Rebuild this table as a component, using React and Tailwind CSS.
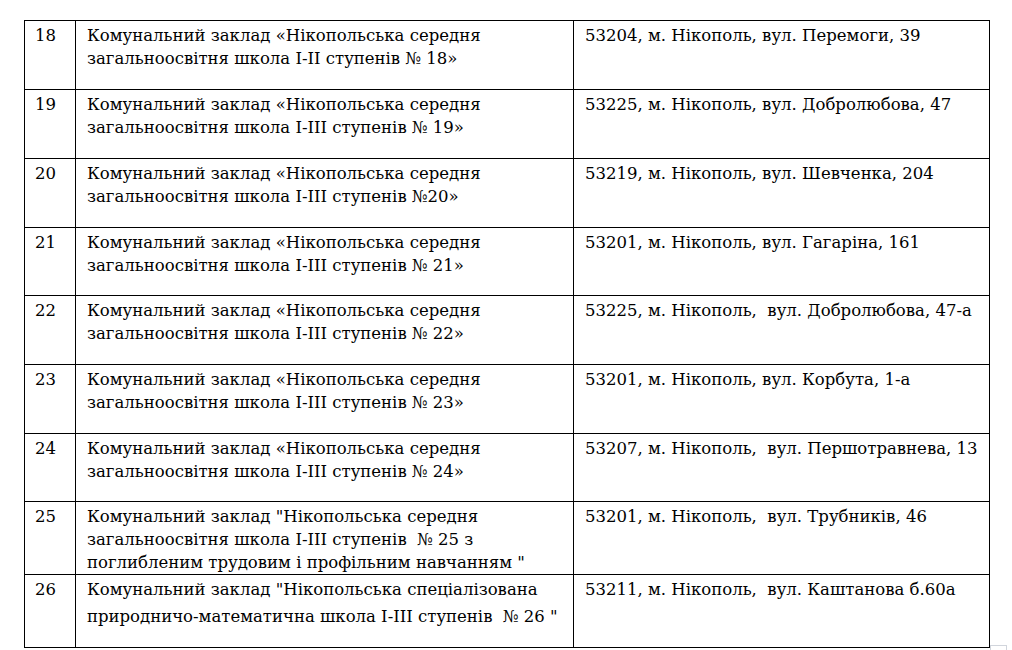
import React from 'react';

const rows = [
  { n: '18', name: ['Комунальний заклад «Нікопольська середня', 'загальноосвітня школа І-ІІ ступенів № 18»'], addr: '53204, м. Нікополь, вул. Перемоги, 39', h: 'h-[69px]' },
  { n: '19', name: ['Комунальний заклад «Нікопольська середня', 'загальноосвітня школа І-ІІІ ступенів № 19»'], addr: '53225, м. Нікополь, вул. Добролюбова, 47', h: 'h-[69px]' },
  { n: '20', name: ['Комунальний заклад «Нікопольська середня', 'загальноосвітня школа І-ІІІ ступенів №20»'], addr: '53219, м. Нікополь, вул. Шевченка, 204', h: 'h-[69px]' },
  { n: '21', name: ['Комунальний заклад «Нікопольська середня', 'загальноосвітня школа І-ІІІ ступенів № 21»'], addr: '53201, м. Нікополь, вул. Гагаріна, 161', h: 'h-[68px]' },
  { n: '22', name: ['Комунальний заклад «Нікопольська середня', 'загальноосвітня школа І-ІІІ ступенів № 22»'], addr: '53225, м. Нікополь,  вул. Добролюбова, 47-а', h: 'h-[69px]' },
  { n: '23', name: ['Комунальний заклад «Нікопольська середня', 'загальноосвітня школа І-ІІІ ступенів № 23»'], addr: '53201, м. Нікополь, вул. Корбута, 1-а', h: 'h-[69px]' },
  { n: '24', name: ['Комунальний заклад «Нікопольська середня', 'загальноосвітня школа І-ІІІ ступенів № 24»'], addr: '53207, м. Нікополь,  вул. Першотравнева, 13', h: 'h-[68px]' },
  { n: '25', name: ['Комунальний заклад "Нікопольська середня', 'загальноосвітня школа І-ІІІ ступенів  № 25 з', 'поглибленим трудовим і профільним навчанням "'], addr: '53201, м. Нікополь,  вул. Трубників, 46', h: 'h-[70px]' },
  { n: '26', name: ['Комунальний заклад "Нікопольська спеціалізована', 'природничо-математична школа І-ІІІ ступенів  № 26 "'], addr: '53211, м. Нікополь,  вул. Каштанова б.60а', h: 'h-[73px]', wide: true },
];

const cell = 'border border-black align-top p-0 pt-[3px] whitespace-pre font-[DejaVu_Serif] text-[16.5px] leading-[23px] text-black';

export default function App() {
  return (
    <div className="relative w-[1012px] h-[650px] bg-white overflow-hidden font-[DejaVu_Serif]">
      <div className="pt-[20px] pl-[24px]">
        <table className="table-fixed border-collapse w-[965px]">
          <colgroup>
            <col className="w-[51px]" />
            <col className="w-[498px]" />
            <col className="w-[416px]" />
          </colgroup>
          <tbody>
            {rows.map((r) => (
              <tr key={r.n} className={r.h}>
                <td className={cell + ' pl-[10px]'}>{r.n}</td>
                <td className={cell + ' pl-[11px]'}>
                  {r.name.map((line, i) => (
                    <div key={i} className={r.wide && i > 0 ? 'mt-[4px]' : ''}>{line}</div>
                  ))}
                </td>
                <td className={cell + ' pl-[11px]'}>{r.addr}</td>
              </tr>
            ))}
          </tbody>
        </table>
      </div>
      <div className="absolute left-[990px] top-[645px] w-[17px] h-[17px] border border-gray-300 bg-white" />
    </div>
  );
}
